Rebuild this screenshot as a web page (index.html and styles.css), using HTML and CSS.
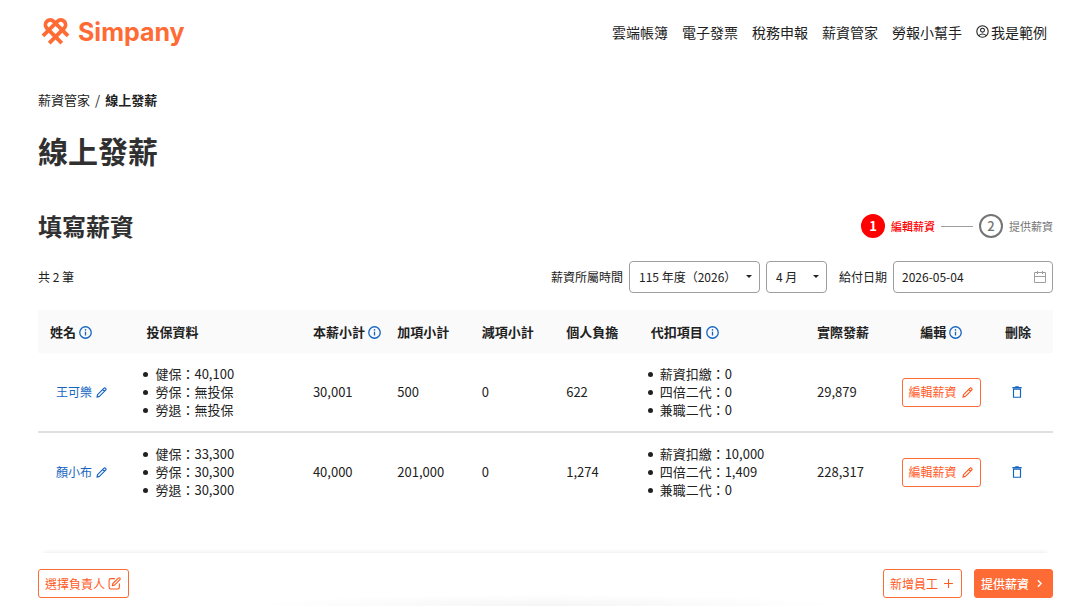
FILE: index.html
```html
<!DOCTYPE html>
<html lang="zh-Hant">
<head>
<meta charset="utf-8">
<meta name="viewport" content="width=device-width, initial-scale=1">
<title>線上發薪 - Simpany</title>
<link rel="stylesheet" href="styles.css">
</head>
<body>
<svg class="sprite" aria-hidden="true">
  <symbol id="info" viewBox="0 0 24 24"><circle cx="12" cy="12" r="10.6" fill="none" stroke="currentColor" stroke-width="2.4"/><path d="M12 10.5v7" stroke="currentColor" stroke-width="2.4"/><circle cx="12" cy="7.2" r="1.5" fill="currentColor"/></symbol>
  <symbol id="pencil" viewBox="0 0 24 24"><path d="M2 22l1.500-5.500L17 3q2-2 4 0t0 4L7.500 20.500zM14.500 5.500l4 4" fill="none" stroke="currentColor" stroke-width="2.500" stroke-linejoin="round"/></symbol>
  <symbol id="trash" viewBox="0 0 24 24"><path d="M4 4.500h16M9 3h6M6 7v14h12V7z" fill="none" stroke="currentColor" stroke-width="2"/></symbol>
</svg>
<header class="topbar">
  <a class="brand" href="#">
    <svg class="brand-mark" viewBox="0 0 30 30" aria-hidden="true"><g fill="none" stroke="currentColor" stroke-width="3.900"><path d="M2 19.500L17 4.500a4.950 4.950 0 0 1 7 7L8.500 27"/><path d="M28 19.500L13 4.500a4.950 4.950 0 0 0-7 7L21.500 27"/></g></svg>
    <span>Simpany</span>
  </a>
  <nav class="nav">
    <a href="#">雲端帳簿</a><a href="#">電子發票</a><a href="#">稅務申報</a><a href="#">薪資管家</a><a href="#">勞報小幫手</a>
    <a class="user" href="#"><svg viewBox="0 0 24 24" aria-hidden="true"><g fill="none" stroke="currentColor" stroke-width="2"><circle cx="12" cy="12" r="10.500"/><circle cx="12" cy="9.500" r="3.600"/><path d="M5 19.500q7-6 14 0"/></g></svg>我是範例</a>
  </nav>
</header>
<main class="page">
  <nav class="crumbs"><a href="#">薪資管家</a><span>/</span><strong>線上發薪</strong></nav>
  <h1>線上發薪</h1>
  <div class="section-head">
    <h2>填寫薪資</h2>
    <ol class="steps">
      <li class="step current"><span class="num">1</span>編輯薪資</li>
      <li class="step"><span class="num">2</span>提供薪資</li>
    </ol>
  </div>
  <div class="filters">
    <span class="count">共 2 筆</span>
    <label for="year">薪資所屬時間</label>
    <div class="select year"><select id="year"><option>115 年度（2026）</option></select></div>
    <div class="select month"><select aria-label="月份"><option>4 月</option></select></div>
    <label class="date-label" for="date">給付日期</label>
    <div class="date"><input id="date" type="text" value="2026-05-04"><svg viewBox="0 0 12 12" aria-hidden="true"><path d="M.5 1.500h11v10H.5zM.5 5.500h11M3.500 0v3M8.500 0v3" fill="none" stroke="currentColor"/></svg></div>
  </div>
  <table class="payroll">
    <colgroup><col class="c-name"><col class="c-list"><col class="c-num"><col class="c-num"><col class="c-num"><col class="c-num"><col class="c-list"><col class="c-num"><col class="c-edit"><col class="c-del"></colgroup>
    <thead>
      <tr>
        <th>姓名<svg class="info"><use href="#info"/></svg></th><th>投保資料</th><th>本薪小計<svg class="info"><use href="#info"/></svg></th><th>加項小計</th><th>減項小計</th><th>個人負擔</th><th>代扣項目<svg class="info"><use href="#info"/></svg></th><th>實際發薪</th><th class="center">編輯<svg class="info"><use href="#info"/></svg></th><th>刪除</th>
      </tr>
    </thead>
    <tbody>
      <tr>
        <td><a class="name" href="#">王可樂<svg class="pencil"><use href="#pencil"/></svg></a></td>
        <td><ul><li>健保：40,100</li><li>勞保：無投保</li><li>勞退：無投保</li></ul></td>
        <td>30,001</td><td>500</td><td>0</td><td>622</td>
        <td><ul><li>薪資扣繳：0</li><li>四倍二代：0</li><li>兼職二代：0</li></ul></td>
        <td>29,879</td>
        <td><button class="btn" type="button">編輯薪資<svg class="pencil"><use href="#pencil"/></svg></button></td>
        <td><button class="trash" type="button" aria-label="刪除"><svg><use href="#trash"/></svg></button></td>
      </tr>
      <tr>
        <td><a class="name" href="#">顏小布<svg class="pencil"><use href="#pencil"/></svg></a></td>
        <td><ul><li>健保：33,300</li><li>勞保：30,300</li><li>勞退：30,300</li></ul></td>
        <td>40,000</td><td>201,000</td><td>0</td><td>1,274</td>
        <td><ul><li>薪資扣繳：10,000</li><li>四倍二代：1,409</li><li>兼職二代：0</li></ul></td>
        <td>228,317</td>
        <td><button class="btn" type="button">編輯薪資<svg class="pencil"><use href="#pencil"/></svg></button></td>
        <td><button class="trash" type="button" aria-label="刪除"><svg><use href="#trash"/></svg></button></td>
      </tr>
    </tbody>
  </table>
  <footer class="actions">
    <button class="btn owner" type="button">選擇負責人<svg class="compose" viewBox="0 0 24 24" aria-hidden="true"><path d="M13 3H5Q2 3 2 6v13q0 3 3 3h13q3 0 3-3v-7M8 16l1-4L19 2q2-1.500 3 0t0 3L12 15z" fill="none" stroke="currentColor" stroke-width="2" stroke-linejoin="round"/></svg></button>
    <button class="btn add" type="button">新增員工<svg viewBox="0 0 10 10" aria-hidden="true"><path d="M5 1v8M1 5h8" fill="none" stroke="currentColor"/></svg></button>
    <button class="btn primary" type="button">提供薪資<svg viewBox="0 0 10 10" aria-hidden="true"><path d="M3.500 2l3 3-3 3" fill="none" stroke="currentColor" stroke-width="1.200"/></svg></button>
  </footer>
</main>
</body>
</html>
```
FILE: styles.css
```css
* { box-sizing: border-box; }
body {
  margin: 0;
  min-height: 100vh;
  background: #fff;
  color: #212121;
  font: 13px/18px "Noto Sans CJK TC", sans-serif;
}
a { color: inherit; text-decoration: none; }
button, input, select { font: inherit; color: inherit; }
svg { flex: none; }
.sprite { display: none; }

.topbar {
  display: flex;
  align-items: center;
  justify-content: space-between;
  height: 63px;
  padding: 0 41px;
}
.brand {
  display: flex;
  align-items: center;
  gap: 8px;
  color: #ff6b35;
  font: 700 25px/32px Inter, sans-serif;
}
.brand-mark { width: 29px; height: 29px; }
.nav { display: flex; gap: 14px; font-size: 14px; line-height: 20px; }
.user { display: flex; align-items: center; gap: 2px; }
.user svg { width: 13px; height: 13px; }

.page { padding: 28px 35px 0 38px; }
.crumbs { display: flex; gap: 5px; }
h1 { margin: 21px 0 0; font-size: 30px; line-height: 40px; color: #303030; }
.section-head {
  display: flex;
  align-items: center;
  justify-content: space-between;
  margin-top: 38px;
}
h2 { margin: 0; font-size: 24px; line-height: 36px; color: #303030; }
.steps {
  display: flex;
  align-items: center;
  margin: 0;
  padding: 0;
  list-style: none;
  font-size: 11px;
  color: #757575;
}
.step { display: flex; align-items: center; gap: 6px; }
.step + .step::before {
  content: "";
  width: 32px;
  height: 1px;
  margin-left: 6px;
  background: #9e9e9e;
}
.num {
  display: grid;
  place-items: center;
  width: 24px;
  height: 24px;
  border: 2px solid #757575;
  border-radius: 50%;
  font-size: 13px;
  font-weight: 500;
}
.current { color: #f00; font-weight: 500; }
.current .num { border-color: #f00; background: #f00; color: #fff; font-weight: 700; }

.filters { display: flex; align-items: center; gap: 6px; margin-top: 17px; font-size: 12px; }
.count { margin-right: auto; }
.date-label { margin-left: 6px; }
.select { position: relative; height: 32px; }
.year { width: 131px; }
.month { width: 61px; }
.select select {
  appearance: none;
  width: 100%;
  height: 100%;
  padding: 0 9px;
  border: 1px solid #9e9e9e;
  border-radius: 4px;
  background: #fff;
}
.select::after {
  content: "";
  position: absolute;
  top: 14px;
  right: 8px;
  border: 3px solid transparent;
  border-top-color: #212121;
  border-bottom: 0;
  pointer-events: none;
}
.date {
  display: flex;
  align-items: center;
  width: 160px;
  height: 32px;
  padding: 0 6px 0 8px;
  border: 1px solid #9e9e9e;
  border-radius: 4px;
}
.date input { flex: 1; min-width: 0; padding: 0; border: 0; outline: 0; background: none; }
.date svg { width: 12px; height: 12px; color: #9e9e9e; }

.payroll { width: 100%; margin-top: 17px; border-collapse: collapse; table-layout: fixed; }
.c-name { width: 9.5%; }
.c-list { width: 16.4%; }
.c-num { width: 8.32%; }
.c-edit { width: 10.2%; }
.c-del { width: 5.9%; }
th { height: 43px; padding: 0 0 0 12px; background: #fafafa; text-align: left; white-space: nowrap; }
th.center { padding: 0; text-align: center; }
td { height: 79px; padding: 0 0 0 12px; }
tbody tr + tr { border-top: 2px solid #e0e0e0; }
.info { width: 13px; height: 13px; margin-left: 3px; color: #1565c0; vertical-align: -2px; }
.name { display: inline-flex; align-items: center; gap: 4px; padding-left: 6px; color: #1565c0; font-size: 12px; }
.pencil { width: 11px; height: 11px; }
.payroll ul { margin: 0 0 0 -3px; padding: 0; list-style: none; }
.payroll li { display: flex; align-items: center; gap: 7px; white-space: nowrap; }
.payroll li::before { content: ""; width: 5px; height: 5px; border-radius: 50%; background: #212121; }
.btn {
  display: inline-flex;
  align-items: center;
  gap: 5px;
  height: 29px;
  padding: 0 7px 0 6px;
  border: 1px solid #ff6b35;
  border-radius: 3px;
  background: #fff;
  color: #ff5a1f;
  font-size: 12px;
  white-space: nowrap;
}
.trash { display: block; margin-left: 5px; padding: 0; border: 0; background: none; color: #1565c0; }
.trash svg { display: block; width: 14px; height: 14px; }

.actions {
  position: relative;
  display: flex;
  gap: 12px;
  margin-top: 42px;
  padding: 16px 0 8px;
  box-shadow: 0 -7px 4px -6px rgba(0, 0, 0, .08);
  background: #fff;
}
.actions::after {
  content: "";
  position: absolute;
  bottom: 0;
  left: 20%;
  right: 20%;
  height: 12px;
  background: radial-gradient(ellipse at bottom, rgba(0, 0, 0, .04), transparent 70%);
  pointer-events: none;
}
.owner { gap: 3px; margin-right: auto; }
.compose { width: 13px; height: 13px; }
.add svg, .primary svg { width: 11px; height: 11px; }
.primary { background: #ff6b35; color: #fff; font-weight: 500; }
```
